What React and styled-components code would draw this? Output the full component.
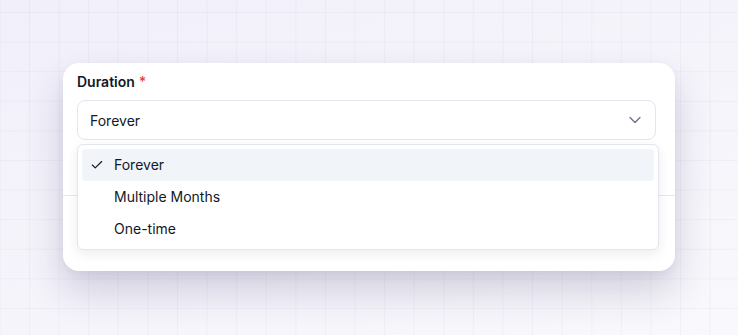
import React, { useState } from 'react'
import styled, { createGlobalStyle } from 'styled-components'
import { Check, ChevronDown } from 'lucide-react'

const OPTIONS = ["Forever", "Multiple Months", "One-time"]

const GlobalStyle = createGlobalStyle`
    html, body {
        margin: 0;
        padding: 0;
    }
    body {
        font-family: Inter, "Noto Sans", sans-serif;
        color: #111827;
        -webkit-font-smoothing: antialiased;
    }
`

const Page = styled.main`
    width: 738px;
    height: 335px;
    box-sizing: border-box;
    display: flex;
    align-items: flex-start;
    justify-content: center;
    padding-top: 63px;
    background-color: #f6f5fb;
    background-image:
        linear-gradient(to right, rgba(110, 95, 170, 0.055) 1px, transparent 1px),
        linear-gradient(to bottom, rgba(110, 95, 170, 0.055) 1px, transparent 1px),
        linear-gradient(160deg, #f1effa 0%, #f5f4fb 50%, #f9f8fc 100%);
    background-size: 29.6px 29.6px, 29.6px 29.6px, 100% 100%;
    background-position: -0.6px 12px, -0.6px 12px, 0 0;
    overflow: hidden;
`

const Card = styled.section`
    width: 612px;
    height: 208px;
    box-sizing: border-box;
    background: #ffffff;
    border-radius: 16px;
    box-shadow:
        0 20px 38px rgba(45, 35, 90, 0.19),
        0 4px 10px rgba(45, 35, 90, 0.06);
    display: flex;
    flex-direction: column;
`

const Body = styled.div`
    padding: 9px 14px 0;
    height: 133px;
    box-sizing: border-box;
    border-bottom: 1px solid #e3e7ef;
`

const Label = styled.label`
    display: block;
    font-size: 14px;
    line-height: 20px;
    font-weight: 600;
    color: #111827;
    margin-bottom: 8px;

    span {
        color: #ef4444;
        margin-left: 4px;
    }
`

const SelectWrap = styled.div`
    position: relative;
`

const Trigger = styled.button`
    width: 579px;
    height: 40px;
    box-sizing: border-box;
    display: flex;
    align-items: center;
    justify-content: space-between;
    padding: 0 10px 0 12px;
    border: 1px solid #e2e6ee;
    border-radius: 8px;
    background: #ffffff;
    font-family: inherit;
    font-size: 14px;
    color: #111827;
    cursor: pointer;

    svg {
        color: #6b7280;
    }
`

const Menu = styled.ul`
    position: absolute;
    top: 44px;
    left: 0;
    width: 582px;
    box-sizing: border-box;
    margin: 0;
    padding: 4px;
    list-style: none;
    background: #ffffff;
    border: 1px solid #e2e6ee;
    border-radius: 6px;
    box-shadow: 0 4px 12px rgba(30, 30, 60, 0.08);
    z-index: 2;
`

const Item = styled.li`
    position: relative;
    height: 32px;
    display: flex;
    align-items: center;
    padding-left: 32px;
    border-radius: 4px;
    font-size: 14px;
    line-height: 18px;
    padding-bottom: 1px;
    box-sizing: border-box;
    color: #111827;
    background: ${p => p.$active ? '#f1f4f8' : 'transparent'};

    svg {
        position: absolute;
        left: 8px;
        top: 9px;
        color: #111827;
    }
`

export default function App() {
    const [value, setValue] = useState(OPTIONS[0])

    return (
        <>
            <GlobalStyle />
            <Page>
                <Card>
                    <Body>
                        <Label>Duration<span>*</span></Label>
                        <SelectWrap>
                            <Trigger type="button">
                                {value}
                                <ChevronDown size={20} strokeWidth={1.5} />
                            </Trigger>
                            <Menu>
                                {OPTIONS.map(opt => (
                                    <Item key={opt} $active={opt === value} onClick={() => setValue(opt)}>
                                        {opt === value && <Check size={14} strokeWidth={2} />}
                                        {opt}
                                    </Item>
                                ))}
                            </Menu>
                        </SelectWrap>
                    </Body>
                </Card>
            </Page>
        </>
    )
}
